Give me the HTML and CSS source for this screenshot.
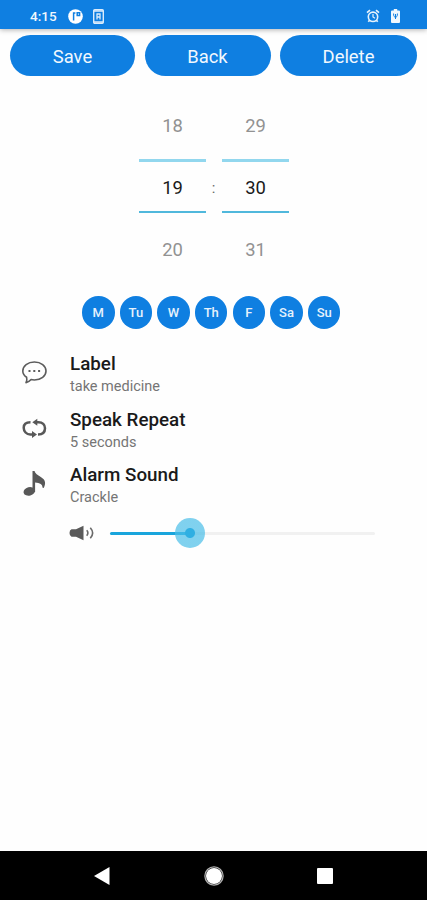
FILE: index.html
```html
<!DOCTYPE html>
<html lang="en">
<head>
  <title>Edit alarm</title>
  <meta charset="utf-8">
  <meta name="viewport" content="width=device-width, initial-scale=1">
  <link rel="stylesheet" href="styles.css">
</head>
<body>
  <div class="screen">
    <header class="status">
      <span class="status-time">4:15</span>
      <svg width="15" height="15" viewBox="0 0 15 15">
        <circle cx="7.5" cy="7.5" r="7.3" fill="#fff"/>
        <path d="M5.6 3.2v8.3M5.6 4h1.8M9.2 3.7h2.4v2.8H9.2z" fill="none" stroke="#0f7fe1" stroke-width="1.5"/>
      </svg>
      <svg class="status-card" width="11" height="15" viewBox="0 0 11 15">
        <rect x=".7" y=".7" width="9.6" height="13.6" rx="1" fill="#0f7fe1" stroke="#dcecfb" stroke-width="1.4"/>
        <path d="M1 2h9M1 13h9" stroke="#dcecfb" stroke-width="1.6"/>
        <path d="M4 4.5v6M7 4.5v6M3.5 5h4M3.5 8h4" fill="none" stroke="#dcecfb" stroke-width="1.3"/>
      </svg>
      <svg class="status-alarm" width="14" height="14" viewBox="0 0 14 14" fill="none" stroke="#e6f2fc">
        <circle cx="7" cy="7.8" r="4.7" stroke-width="1.6"/>
        <path d="M1 3.7L4 1.2M13 3.7L10 1.2M3.6 11.3l-1.3 1.5M10.4 11.3l1.3 1.5" stroke-width="1.7"/>
        <path d="M7 5v3l2 1.2" stroke-width="1.2"/>
      </svg>
      <svg width="9" height="14" viewBox="0 0 9 14">
        <path d="M2.8 0h3.4v1.5H8a1 1 0 0 1 1 1V13a1 1 0 0 1-1 1H1a1 1 0 0 1-1-1V2.5a1 1 0 0 1 1-1h1.8z" fill="#f1f8fe"/>
        <path d="M2.6 4.5c0 3 .5 3.5 1.9 3.5s1.9-.5 1.9-3.5M4.5 5v5" fill="none" stroke="#0f7fe1" stroke-width="1"/>
      </svg>
    </header>

    <div class="actions">
      <button class="button">Save</button>
      <button class="button">Back</button>
      <button class="button">Delete</button>
    </div>

    <div class="picker">
      <div class="picker-column">
        <span class="picker-value">18</span>
        <span class="picker-value picker-current">19</span>
        <span class="picker-value picker-next">20</span>
      </div>
      <span class="picker-colon">:</span>
      <div class="picker-column">
        <span class="picker-value">29</span>
        <span class="picker-value picker-current">30</span>
        <span class="picker-value picker-next">31</span>
      </div>
    </div>

    <div class="days">
      <span class="day">M</span>
      <span class="day">Tu</span>
      <span class="day">W</span>
      <span class="day">Th</span>
      <span class="day">F</span>
      <span class="day">Sa</span>
      <span class="day">Su</span>
    </div>

    <main class="options">
      <div class="option">
        <svg class="option-icon" width="26" height="26" viewBox="0 0 26 26" fill="none" stroke="#5c5c5c">
          <path d="M5.6 18.2C3 16.6 1.8 14.5 1.8 12c0-5 5-9 11.6-9S25 7 25 12s-5 9-11.6 9c-1.2 0-2.3-.1-3.3-.4-1.3 1.6-2.6 2.5-5.1 3 .9-1.6 1.2-3.3.6-5.4z" stroke-width="1.6" stroke-linejoin="round"/>
          <path d="M7.5 12h2M12.3 12h2M17.1 12h2" stroke-width="2"/>
        </svg>
        <div class="option-text">
          <h2 class="option-title">Label</h2>
          <p class="option-value">take medicine</p>
        </div>
      </div>
      <div class="option">
        <svg class="option-icon" width="26" height="26" viewBox="0 0 26 26">
          <path d="M9.5 7.2C5 7.2 2.7 9 2.7 12.7s2.8 6.8 6.5 6.8H12M17 19.5c4.5 0 7-2.5 7-6.2s-2.5-6.1-6.5-6.1H15" fill="none" stroke="#585858" stroke-width="2.5"/>
          <path d="M11.3 7.2l5-3.5v7zM16 19.5l-5-3.5v7z" fill="#585858"/>
        </svg>
        <div class="option-text">
          <h2 class="option-title">Speak Repeat</h2>
          <p class="option-value">5 seconds</p>
        </div>
      </div>
      <div class="option">
        <svg class="option-icon" width="26" height="26" viewBox="0 0 26 26" fill="#585858">
          <ellipse cx="8.3" cy="21.4" rx="5.8" ry="4.2" transform="rotate(-15 8.3 21.4)"/>
          <path d="M11.5 1h2c.7 2.8 3 4 6.3 6 5 3 5.2 6.5 3 11l-1.4-.4c.4-3-2.4-4.7-7.3-5.1V22h-2.6z"/>
        </svg>
        <div class="option-text">
          <h2 class="option-title">Alarm Sound</h2>
          <p class="option-value">Crackle</p>
        </div>
      </div>

      <div class="volume">
        <svg width="26" height="16" viewBox="0 0 26 16">
          <path d="M2.5 4.2H7L14.5.8v14.4L7 11.8H2.5Q.5 11 .5 8t2-3.8z" fill="#5a5a5a"/>
          <path d="M17.7 5.3q2.4 2.7 0 5.4M21.3 2.7q4.7 5.3 0 10.6" fill="none" stroke="#6a6a6a" stroke-width="1.6"/>
        </svg>
        <div class="slider">
          <div class="slider-fill" style="width: 30%"><span class="slider-thumb"></span></div>
        </div>
      </div>
    </main>

    <nav class="navbar">
      <svg width="16" height="18" viewBox="0 0 16 18"><path d="M0 9L15.5 0v18z" fill="#fff"/></svg>
      <svg width="20" height="20" viewBox="0 0 20 20">
        <circle cx="10" cy="10" r="9.1" fill="none" stroke="#b0b0b0" stroke-width="1.3"/>
        <circle cx="10" cy="10" r="8" fill="#fff"/>
      </svg>
      <svg width="16" height="16" viewBox="0 0 16 16"><rect width="16" height="16" rx="1" fill="#fff"/></svg>
    </nav>
  </div>
</body>
</html>
```
FILE: styles.css
```css
*, *::before, *::after {
  margin: 0;
  padding: 0;
  box-sizing: border-box;
}

body {
  background-color: #FEFEFE;
  color: #1A1A1A;
  font-family: Roboto, sans-serif;
}

svg {
  display: block;
  flex-shrink: 0;
}

.screen {
  display: flex;
  flex-direction: column;
  height: 900px;
}

.status {
  display: flex;
  align-items: center;
  height: 29px;
  padding: 3px 27px 0 30px;
  background-color: #0F7FE1;
  box-shadow: 0 1px 5px rgba(0, 0, 0, 0.3);
  color: #F1F8FE;
}

.status-time {
  width: 38px;
  font-size: 13.5px;
  font-weight: 500;
}

.status-card {
  margin-left: 10px;
}

.status-alarm {
  margin-right: 11px;
  margin-left: auto;
}

.actions {
  display: grid;
  grid-template-columns: 125px 126px 137px;
  gap: 9.5px;
  padding: 6px 10px 0;
  position: relative;
}

.button {
  height: 41px;
  padding-top: 2px;
  border: none;
  border-radius: 21px;
  background-color: #0F7FE1;
  color: #F1F8FE;
  font-family: inherit;
  font-size: 18.4px;
}

.picker {
  display: flex;
  justify-content: center;
  margin-top: 15px;
}

.picker-column {
  width: 67px;
}

.picker-value {
  display: flex;
  justify-content: center;
  align-items: center;
  height: 68px;
  padding-left: 1px;
  color: #929292;
  font-size: 18.4px;
}

.picker-current {
  height: 54px;
  padding-top: 1px;
  border-top: 3px solid #92D7EE;
  border-bottom: 2px solid #50B8DC;
  color: #1A1A1A;
}

.picker-next {
  height: 72px;
}

.picker-colon {
  align-self: center;
  width: 16px;
  color: #666666;
  font-size: 15px;
  text-align: center;
}

.days {
  display: flex;
  justify-content: space-between;
  width: 258.5px;
  margin: 11px 0 0 82px;
}

.day {
  display: flex;
  justify-content: center;
  align-items: center;
  width: 32.5px;
  height: 32.5px;
  border-radius: 50%;
  background-color: #0F7FE1;
  color: #E6F2FC;
  font-size: 13px;
  font-weight: 500;
}

.options {
  flex-grow: 1;
  padding: 23.5px 52px 0 21px;
}

.option {
  display: flex;
  height: 55.5px;
}

.option-icon {
  margin-top: 7px;
}

.option-text {
  margin-left: 23px;
}

.option-title {
  font-size: 18.8px;
  font-weight: 500;
  line-height: 24px;
}

.option-value {
  color: #757575;
  font-size: 14.5px;
  line-height: 21px;
}

.volume {
  display: flex;
  align-items: center;
  height: 29px;
  padding-left: 48px;
}

.slider {
  flex-grow: 1;
  height: 3px;
  margin-left: 15px;
  border-radius: 2px;
  background-color: #F1F1F1;
}

.slider-fill {
  position: relative;
  height: 3px;
  border-radius: 2px;
  background-color: #19A5DC;
}

.slider-thumb {
  position: absolute;
  top: -13.5px;
  right: -15px;
  width: 30px;
  height: 30px;
  border-radius: 50%;
  background: radial-gradient(circle, #2FAFE2 4.5px, rgba(74, 190, 232, 0.7) 5.5px);
}

.navbar {
  display: flex;
  justify-content: space-between;
  align-items: center;
  height: 49px;
  padding: 0 94px;
  background-color: #000000;
}
```
